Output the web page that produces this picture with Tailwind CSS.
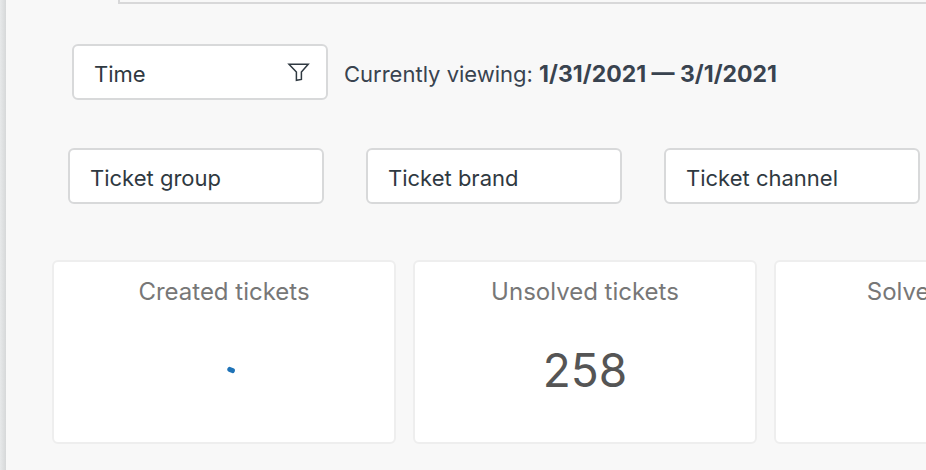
<!DOCTYPE html>
<html lang="en">
<head>
  <meta charset="UTF-8">
  <meta name="viewport" content="width=device-width, initial-scale=1.0">
  <title>Tickets dashboard</title>
  <script src="https://cdn.jsdelivr.net/npm/@tailwindcss/browser@4"></script>
</head>
<body class="flex min-h-screen bg-[#f8f8f8] font-['Inter',sans-serif] text-[#2f3941]">
  <!-- Edge of the side navigation -->
  <div class="w-1.5 shrink-0 bg-linear-to-r from-[#e7e9ea] to-[#d6d8d9]"></div>

  <main class="min-w-0 flex-1 overflow-hidden">
    <!-- Bottom of the tab bar -->
    <div class="ml-28 h-1 border-b-2 border-l-2 border-[#d8d8d9]"></div>

    <!-- Time filter -->
    <div class="mt-10 ml-[66px] flex items-center gap-4">
      <button type="button" class="flex h-14 w-64 shrink-0 items-center justify-between rounded-md border-2 border-[#d8d9da] bg-white pt-1 pr-4 pl-5 text-[22px] leading-7">
        <span>Time</span>
        <svg class="h-6 w-6" viewBox="0 0 24 24" fill="none" stroke="currentColor" stroke-width="1.5" aria-hidden="true">
          <path d="M3 2.3h19.2L15.4 10v7.4l-5 .9V10z" />
        </svg>
      </button>
      <p class="pt-1 text-[22px] leading-7 whitespace-nowrap text-[#39434f]">Currently viewing: <strong class="text-[23px] font-bold">1/31/2021 — 3/1/2021</strong></p>
    </div>

    <!-- Ticket filters -->
    <div class="mt-12 ml-[62px] flex gap-[42px]">
      <button type="button" class="h-14 w-64 shrink-0 rounded-md border-2 border-[#d8d9da] bg-white px-5 pt-1 text-left text-[22px] leading-7">Ticket group</button>
      <button type="button" class="h-14 w-64 shrink-0 rounded-md border-2 border-[#d8d9da] bg-white px-5 pt-1 text-left text-[22px] leading-7">Ticket brand</button>
      <button type="button" class="h-14 w-64 shrink-0 rounded-md border-2 border-[#d8d9da] bg-white px-5 pt-1 text-left text-[22px] leading-7">Ticket channel</button>
    </div>

    <!-- Metric cards -->
    <div class="mt-14 ml-[46px] flex gap-[17px]">
      <section class="flex h-[184px] w-[344px] shrink-0 flex-col items-center rounded-md border-2 border-[#eeeeee] bg-white pt-3.5">
        <h2 class="text-2xl text-[#777777]">Created tickets</h2>
        <!-- Loading spinner, first frame -->
        <svg class="mt-13 ml-4 h-6 w-6" viewBox="0 0 24 24" fill="none" stroke="#1f73b7" stroke-width="5" stroke-linecap="round" role="img" aria-label="Loading">
          <path d="M9.8 9.4l2.6 1.2" />
        </svg>
      </section>
      <section class="flex h-[184px] w-[344px] shrink-0 flex-col items-center rounded-md border-2 border-[#eeeeee] bg-white pt-3.5">
        <h2 class="text-2xl text-[#777777]">Unsolved tickets</h2>
        <p class="mt-8 text-[46px] leading-15 text-[#555555]">258</p>
      </section>
      <section class="flex h-[184px] w-[344px] shrink-0 flex-col items-center rounded-md border-2 border-[#eeeeee] bg-white pt-3.5">
        <h2 class="text-2xl text-[#777777]">Solved tickets</h2>
      </section>
    </div>
  </main>
</body>
</html>
